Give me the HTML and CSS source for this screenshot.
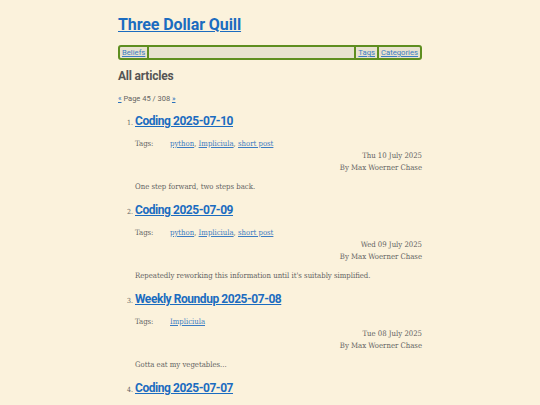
FILE: index.html
```html
<!DOCTYPE html>
<html>
<head>
<meta charset="utf-8">
<link rel="stylesheet" href="styles.css">
</head>
<body>
<div class="page">
  <h1 class="site-title"><a href="#">Three Dollar Quill</a></h1>
  <nav class="nav">
    <a href="#" class="nav-link">Beliefs</a>
    <span class="nav-fill"></span>
    <a href="#" class="nav-link">Tags</a>
    <a href="#" class="nav-link">Categories</a>
  </nav>
  <h2 class="section-title">All articles</h2>
  <p class="pager"><a href="#">«</a> Page 45 / 308 <a href="#">»</a></p>
  <ol class="articles">
    <li class="article">
      <h3 class="article-title"><a href="#">Coding 2025-07-10</a></h3>
      <div class="tags"><span class="tags-label">Tags:</span><span><a href="#">python</a>, <a href="#">Impliciula</a>, <a href="#">short post</a></span></div>
      <div class="meta">Thu 10 July 2025</div>
      <div class="meta">By Max Woerner Chase</div>
      <p class="summary">One step forward, two steps back.</p>
    </li>
    <li class="article">
      <h3 class="article-title"><a href="#">Coding 2025-07-09</a></h3>
      <div class="tags"><span class="tags-label">Tags:</span><span><a href="#">python</a>, <a href="#">Impliciula</a>, <a href="#">short post</a></span></div>
      <div class="meta">Wed 09 July 2025</div>
      <div class="meta">By Max Woerner Chase</div>
      <p class="summary">Repeatedly reworking this information until it's suitably simplified.</p>
    </li>
    <li class="article">
      <h3 class="article-title"><a href="#">Weekly Roundup 2025-07-08</a></h3>
      <div class="tags"><span class="tags-label">Tags:</span><span><a href="#">Impliciula</a></span></div>
      <div class="meta">Tue 08 July 2025</div>
      <div class="meta">By Max Woerner Chase</div>
      <p class="summary">Gotta eat my vegetables...</p>
    </li>
    <li class="article">
      <h3 class="article-title"><a href="#">Coding 2025-07-07</a></h3>
    </li>
  </ol>
</div>
</body>
</html>
```

FILE: styles.css
```css
html, body {
  margin: 0;
  padding: 0;
  background: #fbf2dc;
  color: #636363;
  font-family: "DejaVu Serif Condensed", "DejaVu Serif", serif;
  font-size: 7.7px;
}
a { color: #2a72bd; }
.page {
  width: 304px;
  margin: 0 auto;
  padding-top: 15px;
}
.site-title {
  margin: 0;
  font-family: Roboto, "Open Sans", sans-serif;
  font-size: 16px;
  line-height: 20px;
  font-weight: 700;
  letter-spacing: -0.1px;
}
.site-title a { color: #1b6cc0; }
.nav {
  margin-top: 10px;
  height: 11px;
  display: flex;
  border: 2px solid #5e8e20;
  border-radius: 3px;
  background: #e8e2d0;
  font-family: Roboto, "Open Sans", sans-serif;
  font-size: 7.7px;
  line-height: 11px;
}
.nav-link {
  padding: 0 2px;
  color: #3b7cc2;
}
.nav-fill {
  flex: 1;
  border-left: 2px solid #5e8e20;
  border-right: 2px solid #5e8e20;
}
.nav-link + .nav-link { border-left: 2px solid #5e8e20; }
.section-title {
  margin: 8px 0 0;
  font-family: Roboto, "Open Sans", sans-serif;
  font-size: 12px;
  line-height: 16px;
  font-weight: 700;
  color: #555;
  letter-spacing: -0.2px;
}
.pager {
  margin: 10px 0 0;
  line-height: 10px;
  font-family: Roboto, "Open Sans", sans-serif;
  font-size: 7.5px;
}
.articles {
  margin: 8px 0 0;
  padding-left: 17px;
}
.article + .article { margin-top: 9px; }
.article::marker { font-size: 7px; }
.article-title {
  margin: 0;
  font-family: Roboto, "Open Sans", sans-serif;
  font-size: 12px;
  line-height: 18px;
  font-weight: 700;
  letter-spacing: -0.45px;
}
.article-title a { color: #1b6cc0; }
.tags {
  margin-top: 9px;
  line-height: 10px;
  display: flex;
}
.tags-label { width: 35px; }
.tags a { color: #3b7cc2; }
.meta {
  text-align: right;
  line-height: 12px;
}
.tags + .meta { margin-top: 1px; }
.summary {
  margin: 8px 0 0;
  line-height: 10px;
}
```
